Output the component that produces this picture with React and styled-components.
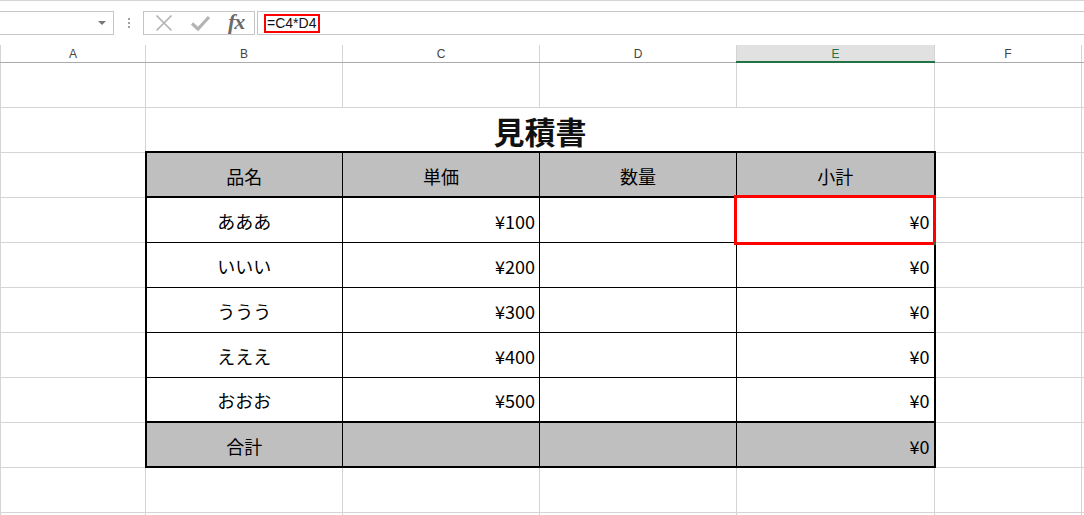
import React from 'react';
import styled, { createGlobalStyle } from 'styled-components';

const GlobalStyle = createGlobalStyle`
  html, body {
    margin: 0;
    padding: 0;
    background: #fff;
    overflow: hidden;
  }
  body {
    font-family: "Noto Sans CJK JP", "Liberation Sans", sans-serif;
  }
`;

const COLS = [145, 197, 197, 197, 198, 147, 200];
const LETTERS = ['A', 'B', 'C', 'D', 'E', 'F', 'G'];
const ACTIVE_COL = 4;

const Screen = styled.div`
  width: 1084px;
  height: 515px;
  overflow: hidden;
  position: relative;
`;

const RibbonEdge = styled.div`
  height: 11px;
  border-top: 1px solid #d5d5d5;
  box-sizing: border-box;
`;

const FormulaBar = styled.div`
  display: flex;
  align-items: stretch;
  height: 24px;
`;

const NameBox = styled.div`
  width: 116px;
  margin-left: -2px;
  box-sizing: border-box;
  border: 1px solid #c6c6c6;
  display: flex;
  align-items: center;
  justify-content: flex-end;
  padding-right: 7px;
`;

const Caret = styled.div`
  width: 0;
  height: 0;
  border-left: 4px solid transparent;
  border-right: 4px solid transparent;
  border-top: 4px solid #777;
`;

const Grip = styled.div`
  width: 29px;
  display: flex;
  flex-direction: column;
  align-items: center;
  justify-content: center;
  gap: 2px;

  span {
    width: 2px;
    height: 2px;
    background: #a0a0a0;
  }
`;

const IconBox = styled.div`
  width: 112px;
  box-sizing: border-box;
  border: 1px solid #c6c6c6;
  display: flex;
  align-items: center;
  padding-left: 11px;
  gap: 17px;
`;

const Fx = styled.span`
  font-family: "Liberation Serif", "DejaVu Serif", serif;
  font-style: italic;
  font-weight: bold;
  font-size: 22px;
  color: #6a6a6a;
  line-height: 1;
  margin-top: -2px;
  letter-spacing: -1px;
`;

const FormulaInput = styled.div`
  flex: 1;
  margin-left: 2px;
  box-sizing: border-box;
  border: 1px solid #c6c6c6;
  border-right: none;
  display: flex;
  align-items: center;
  padding-left: 6px;
`;

const FormulaText = styled.span`
  font-family: "Liberation Sans", Arial, sans-serif;
  font-size: 14px;
  color: #111;
  border: 2px solid #ff0000;
  padding: 0 2px 0 1px;
  line-height: 15px;
`;

const Sheet = styled.table`
  margin-top: 10px;
  border-collapse: collapse;
  table-layout: fixed;
  width: ${COLS.reduce((a, b) => a + b, 0)}px;
`;

const ColHead = styled.th`
  height: 14px;
  padding: 2px 0 0 0;
  font-family: "Liberation Sans", Arial, sans-serif;
  font-weight: normal;
  font-size: 12px;
  line-height: 14px;
  text-align: center;
  color: ${(p) => (p.$active ? '#217346' : '#444')};
  background: ${(p) => (p.$active ? '#e1e1e1' : '#fff')};
  border-left: 1px solid #d4d4d4;
  border-right: 1px solid #d4d4d4;
  border-bottom: ${(p) => (p.$active ? '2px solid #217346' : '1px solid #ababab')};
`;

const Row = styled.tr`
  height: 45px;
`;

const Cell = styled.td`
  padding: ${(p) => (p.$align === 'right' ? '2px 4px 0 0' : '2px 0 0 0')};
  text-align: ${(p) => p.$align || 'center'};
  vertical-align: middle;
  font-size: 18px;
  color: #000;
  white-space: nowrap;
  overflow: visible;
  background: ${(p) => p.$bg || 'transparent'};
  border-top: ${(p) => p.$t || '1px solid #d4d4d4'};
  border-bottom: ${(p) => p.$b || '1px solid #d4d4d4'};
  border-left: ${(p) => p.$l || '1px solid #d4d4d4'};
  border-right: ${(p) => p.$r || '1px solid #d4d4d4'};
  position: ${(p) => (p.$selected ? 'relative' : 'static')};
`;

const TitleCell = styled.td`
  padding: 0 0 1px 0;
  text-align: center;
  vertical-align: bottom;
  font-size: 31px;
  font-weight: 700;
  line-height: 38px;
  color: #111;
  border-top: 1px solid #d4d4d4;
  border-left: 1px solid #d4d4d4;
  border-right: 1px solid #d4d4d4;
`;

const Selection = styled.div`
  position: absolute;
  left: -3px;
  top: -3px;
  right: -2px;
  bottom: -3px;
  border: 3px solid #ff0000;
  pointer-events: none;

  &::after {
    content: '';
    position: absolute;
    right: -3px;
    bottom: -3px;
    width: 3px;
    height: 3px;
    background: #217346;
  }
`;

const THICK = '2px solid #000';
const THIN = '1px solid #000';
const GRAY = '#bfbfbf';

const items = [
  ['あああ', '¥100', '', '¥0'],
  ['いいい', '¥200', '', '¥0'],
  ['ううう', '¥300', '', '¥0'],
  ['えええ', '¥400', '', '¥0'],
  ['おおお', '¥500', '', '¥0'],
];

const tableRows = [
  { cells: ['品名', '単価', '数量', '小計'], kind: 'head' },
  ...items.map((cells) => ({ cells, kind: 'item' })),
  { cells: ['合計', '', '', '¥0'], kind: 'total' },
];

function borderFor(rowIdx, colIdx) {
  const last = tableRows.length - 1;
  const kind = tableRows[rowIdx].kind;
  return {
    $t: rowIdx === 0 || kind === 'total' ? THICK : THIN,
    $b: kind === 'head' || rowIdx === last ? THICK : THIN,
    $l: colIdx === 0 ? THICK : THIN,
    $r: colIdx === 3 ? THICK : THIN,
  };
}

const EmptyCells = ({ count }) =>
  Array.from({ length: count }).map((_, i) => <Cell key={i} />);

const XIcon = () => (
  <svg width="18" height="18" viewBox="0 0 18 18">
    <path d="M1.5 1.5 L16.5 16.5 M16.5 1.5 L1.5 16.5" stroke="#b4b4b4" strokeWidth="1.7" fill="none" />
  </svg>
);

const CheckIcon = () => (
  <svg width="21" height="18" viewBox="0 0 21 18">
    <path d="M2 9.5 L8 15 L19 3" stroke="#b4b4b4" strokeWidth="3.2" fill="none" />
  </svg>
);

export default function App() {
  return (
    <Screen>
      <GlobalStyle />
      <RibbonEdge />
      <FormulaBar>
        <NameBox>
          <Caret />
        </NameBox>
        <Grip>
          <span />
          <span />
          <span />
        </Grip>
        <IconBox>
          <XIcon />
          <CheckIcon />
          <Fx>fx</Fx>
        </IconBox>
        <FormulaInput>
          <FormulaText>=C4*D4</FormulaText>
        </FormulaInput>
      </FormulaBar>

      <Sheet>
        <colgroup>
          {COLS.map((w, i) => (
            <col key={i} style={{ width: w }} />
          ))}
        </colgroup>
        <thead>
          <tr>
            {LETTERS.map((l, i) => (
              <ColHead key={l} $active={i === ACTIVE_COL}>
                {i < 6 ? l : ''}
              </ColHead>
            ))}
          </tr>
        </thead>
        <tbody>
          <Row>
            <EmptyCells count={7} />
          </Row>
          <Row>
            <Cell />
            <TitleCell colSpan={4}>見積書</TitleCell>
            <EmptyCells count={2} />
          </Row>
          {tableRows.map((row, r) => (
            <Row key={r}>
              <Cell />
              {row.cells.map((text, c) => {
                const numeric = row.kind !== 'head' && c > 0;
                const selected = r === 1 && c === 3;
                return (
                  <Cell
                    key={c}
                    {...borderFor(r, c)}
                    $bg={row.kind === 'item' ? '#fff' : GRAY}
                    $align={numeric ? 'right' : 'center'}
                    $selected={selected}
                  >
                    {text}
                    {selected && <Selection />}
                  </Cell>
                );
              })}
              <EmptyCells count={2} />
            </Row>
          ))}
          <Row>
            <EmptyCells count={7} />
          </Row>
          <Row>
            <EmptyCells count={7} />
          </Row>
        </tbody>
      </Sheet>
    </Screen>
  );
}
